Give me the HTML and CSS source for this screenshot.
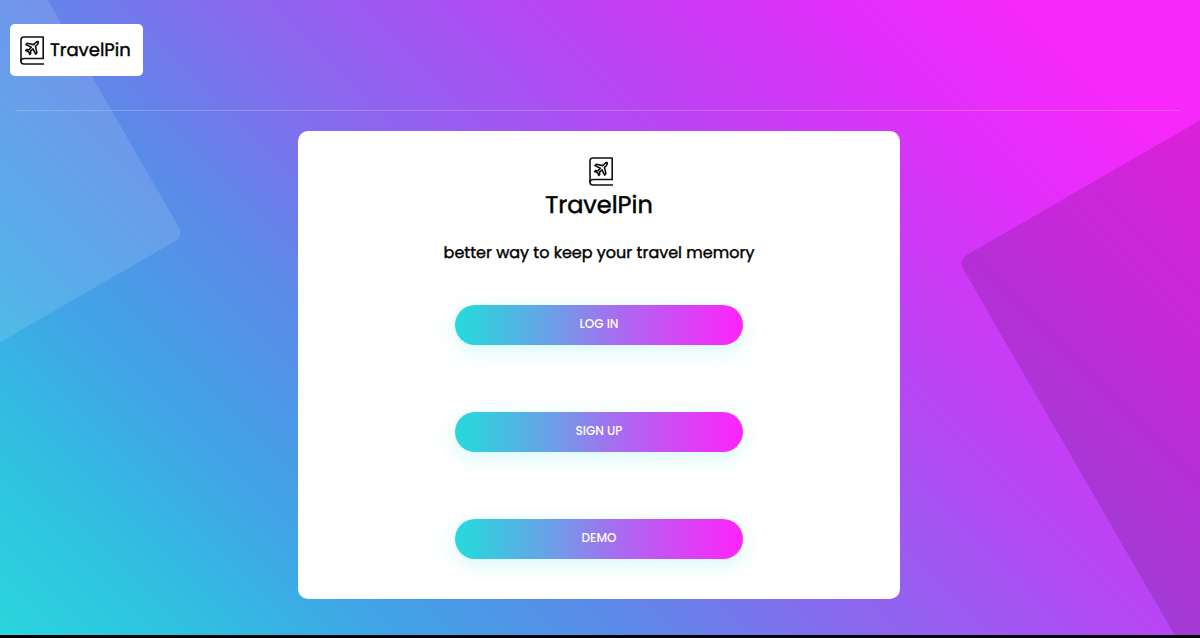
FILE: index.html
```html
<!DOCTYPE html>
<html lang="en">
<head>
<meta charset="utf-8">
<title>TravelPin</title>
<meta name="viewport" content="width=device-width, initial-scale=1">
<link rel="stylesheet" href="styles.css">
</head>
<body>
<svg class="defs" aria-hidden="true">
  <symbol id="travel-book" viewBox="0 0 24 29">
    <g fill="none" stroke="#111" stroke-width="1.6" stroke-linejoin="round">
      <path d="M23.2 22.5V1H4Q1 1 1 4V25.500"/>
      <path d="M24 22.500H4Q1 22.500 1 25.250T4 28H24"/>
      <path d="M18.300 5.700Q17 5.300 15.600 6.700L13.700 8.600L7.300 7.300L6 8.600L11.300 11.300L9 13.800L6.700 13.600L5.700 14.600L8.600 15.700L9.800 18.500L10.700 17.500L10.500 15.200L13 12.900L15.600 18.100L16.900 16.800L15.500 10.400L17.400 8.500Q18.700 7.100 18.300 5.700Z"/>
    </g>
  </symbol>
</svg>
<div class="page">
  <div class="shape shape-light"></div>
  <div class="shape shape-dark"></div>
  <header class="header">
    <a class="brand" href="#">
      <svg class="icon" aria-hidden="true"><use href="#travel-book"/></svg>
      <span>TravelPin</span>
    </a>
  </header>
  <main class="card">
    <svg class="icon icon-card" aria-hidden="true"><use href="#travel-book"/></svg>
    <h1 class="title">TravelPin</h1>
    <p class="tagline">better way to keep your travel memory</p>
    <div class="actions">
      <button class="button" type="button">LOG IN</button>
      <button class="button" type="button">SIGN UP</button>
      <button class="button" type="button">DEMO</button>
    </div>
  </main>
</div>
</body>
</html>
```
FILE: styles.css
```css
* {
  box-sizing: border-box;
}

body {
  margin: 0;
  background: #000;
  color: #000;
  font-family: Poppins, Inter, sans-serif;
  font-weight: 400;
  text-rendering: geometricPrecision;
}

.defs {
  position: absolute;
  width: 0;
  height: 0;
}

.page {
  position: relative;
  overflow: hidden;
  min-height: calc(100vh - 3px);
  padding: 0 2px 36px 0;
  background: linear-gradient(45deg, #2ad5dd 0%, #2fc2e0 10%, #40a5e6 21%, #5a8be8 34%, #866bee 46%, #b945f4 64%, #d236f6 74%, #e22ffa 80%, #f728fa 91%);
}

.shape {
  position: absolute;
  border-radius: 10px;
  transform: rotate(-30deg);
}

.shape-light {
  top: -164px;
  left: -216px;
  width: 400px;
  height: 400px;
  background: rgba(255, 255, 255, 0.12);
  transform-origin: bottom right;
}

.shape-dark {
  top: 260px;
  left: calc(80% - 2px);
  width: 700px;
  height: 700px;
  background: rgba(0, 0, 0, 0.13);
  transform-origin: top left;
}

.header {
  position: relative;
  margin: 0 18px 20px 16px;
  padding: 24px 0 34px;
  border-bottom: 1px solid rgba(255, 255, 255, 0.2);
}

.brand {
  display: inline-flex;
  align-items: center;
  gap: 6px;
  height: 52px;
  margin-left: -6px;
  padding: 0 12px 0 10px;
  border-radius: 5px;
  background: #fff;
  color: inherit;
  font-size: 18px;
  text-decoration: none;
  vertical-align: top;
  -webkit-text-stroke: 0.4px #000;
}

.icon {
  display: block;
  width: 24px;
  height: 29px;
}

.icon-card {
  margin-left: 4px;
}

.card {
  position: relative;
  display: flex;
  flex-direction: column;
  align-items: center;
  width: calc(50% + 3px);
  margin: 0 auto;
  padding: 26px 16px 40px;
  border-radius: 10px;
  background: #fff;
}

.title {
  margin: 0;
  font-size: 24px;
  line-height: 40px;
  font-weight: 400;
  -webkit-text-stroke: 0.5px #000;
}

.tagline {
  margin: 13px 0 38px;
  font-size: 16px;
  line-height: 28px;
  -webkit-text-stroke: 0.4px #000;
}

.actions {
  display: grid;
  gap: 67px;
  width: 288px;
}

.button {
  height: 40px;
  padding: 0 0 2px;
  border: 0;
  border-radius: 20px;
  background: linear-gradient(90deg, #2ad5dd 4%, #6f9de8 35%, #a96bf0 57%, #fa27fa 97%);
  box-shadow: 0 5px 20px rgba(42, 213, 221, 0.2);
  color: #fff;
  font: inherit;
  font-size: 12px;
  font-weight: 500;
  cursor: pointer;
}
```
